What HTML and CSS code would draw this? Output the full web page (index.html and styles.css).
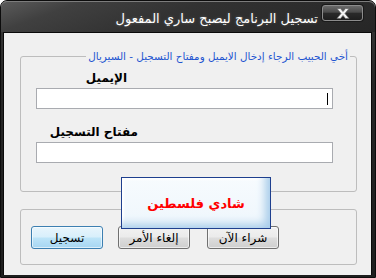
FILE: index.html
```html
<!DOCTYPE html>
<html lang="ar">
<head>
    <meta charset="UTF-8">
    <meta name="viewport" content="width=device-width, initial-scale=1.0">
    <title>تسجيل البرنامج</title>
    <link rel="stylesheet" href="styles.css">
</head>
<body>
    <div class="window">
        <div class="titlebar">
            <span class="title">تسجيل البرنامج ليصبح ساري المفعول</span>
            <div class="close-btn">
                <svg width="14" height="11" viewBox="0 0 14 11">
                    <path d="M1 0.5 H4.5 L7 3.5 L9.5 0.5 H13 L9 5.5 L13 10.5 H9.5 L7 7.5 L4.5 10.5 H1 L5 5.5 Z" fill="#f4f4f4" stroke="#6a6a6a" stroke-width="0.8"/>
                </svg>
            </div>
        </div>

        <div class="client">
            <fieldset class="group">
                <legend>أخي الحبيب الرجاء إدخال الايميل ومفتاح التسجيل - السيريال</legend>
                <label class="field-label email-label">الإيميل</label>
                <div class="field"><span class="caret"></span></div>
                <label class="field-label key-label">مفتاح التسجيل</label>
                <div class="field"></div>
            </fieldset>

            <div class="group actions">
                <button class="btn btn-default">تسجيل</button>
                <button class="btn">إلغاء الأمر</button>
                <button class="btn">شراء الآن</button>
            </div>

            <div class="stamp">شادي فلسطين</div>
        </div>
    </div>
</body>
</html>
```

FILE: styles.css
```css
:root {
    --client-bg: #f0f0f0;
    --group-border: #bdbdbd;
    --legend-blue: #1f55d0;
    --field-border: #a9abb0;
}

* {
    margin: 0;
    padding: 0;
    box-sizing: border-box;
    font-family: 'DejaVu Sans', sans-serif;
}

body {
    background-color: #ffffff;
}

.window {
    width: 376px;
    height: 278px;
    display: flex;
    flex-direction: column;
    background: linear-gradient(to bottom, #3a3a3a, #262626 30%, #1e1e1e);
    border: 1px solid #0c0c0c;
    border-radius: 7px 7px 0 0;
    padding: 0 3px 2px 2px;
}

.titlebar {
    height: 31px;
    display: flex;
    justify-content: flex-end;
    align-items: flex-start;
    margin: 0 -3px 0 -2px;
    padding: 0 12px 0 2px;
    border-radius: 6px 6px 0 0;
    background: linear-gradient(160deg, #5c5c5c 0, #404040 18%, #323232 45%, #262626 100%);
    box-shadow: inset 0 1px 0 #7c7c7c;
}

.title {
    direction: rtl;
    color: #ffffff;
    font-size: 13px;
    line-height: 15px;
    margin-top: 10px;
    margin-right: 4px;
    text-shadow: 0 0 3px rgba(255, 255, 255, 0.25);
}

.close-btn {
    width: 41px;
    height: 16px;
    margin-top: 4px;
    display: flex;
    align-items: center;
    justify-content: center;
    border: 1px solid #8c8c8c;
    border-radius: 3px;
    background: linear-gradient(to bottom, #6a6a6a 0, #4a4a4a 45%, #2a2a2a 50%, #1e1e1e 100%);
    box-shadow: 0 0 0 1px #1a1a1a;
}

.client {
    position: relative;
    flex: 1;
    background-color: var(--client-bg);
    border: 1px solid #0a0a0a;
    border-bottom: none;
    padding-top: 16px;
}

.group {
    margin: 0 14px 0 16px;
    border: 1px solid var(--group-border);
    border-radius: 3px;
}

fieldset.group {
    direction: rtl;
    padding: 0 23px 28px 15px;
    min-width: 0;
}

legend {
    color: var(--legend-blue);
    font-size: 10.4px;
    line-height: 14px;
    white-space: nowrap;
    padding: 0 2px;
    margin-right: -17px;
}

.field-label {
    display: block;
    font-size: 12px;
    line-height: 14px;
    font-weight: bold;
    color: #000000;
}

.email-label {
    margin-top: 8px;
    margin-right: 206px;
}

.key-label {
    margin-top: 16px;
    margin-right: 195px;
}

.field {
    height: 21px;
    margin-top: 3px;
    background-color: #ffffff;
    border: 1px solid var(--field-border);
    position: relative;
}

.caret {
    position: absolute;
    right: 4px;
    top: 4px;
    width: 1px;
    height: 12px;
    background-color: #000000;
}

.actions {
    margin-top: 17px;
    height: 56px;
    display: flex;
    align-items: flex-start;
    gap: 15px;
    padding: 16px 0 0 10px;
}

.btn {
    width: 72px;
    height: 23px;
    font-size: 12px;
    color: #000000;
    border: 1px solid #707070;
    border-radius: 3px;
    background: linear-gradient(to bottom, #f2f2f2 0, #ebebeb 48%, #dddddd 52%, #cfcfcf 100%);
    box-shadow: inset 0 0 0 1px rgba(255, 255, 255, 0.6);
}

.btn-default {
    border-color: #3c7fb1;
    background: linear-gradient(to bottom, #e8f5fc 0, #d8effb 48%, #bde4f8 52%, #a6d6f2 100%);
}

.btn + .btn + .btn {
    margin-left: 2px;
}

.stamp {
    position: absolute;
    left: 117px;
    top: 144px;
    width: 150px;
    height: 52px;
    display: flex;
    align-items: center;
    justify-content: center;
    direction: rtl;
    color: #ff0000;
    font-size: 13px;
    font-weight: bold;
    border: 1px solid #1e3f8e;
    background: linear-gradient(to bottom, #f7fbfe, #eef6fc);
    box-shadow: inset -7px -6px 8px -2px #a9cdea, inset 2px 2px 2px #ffffff;
}
```
